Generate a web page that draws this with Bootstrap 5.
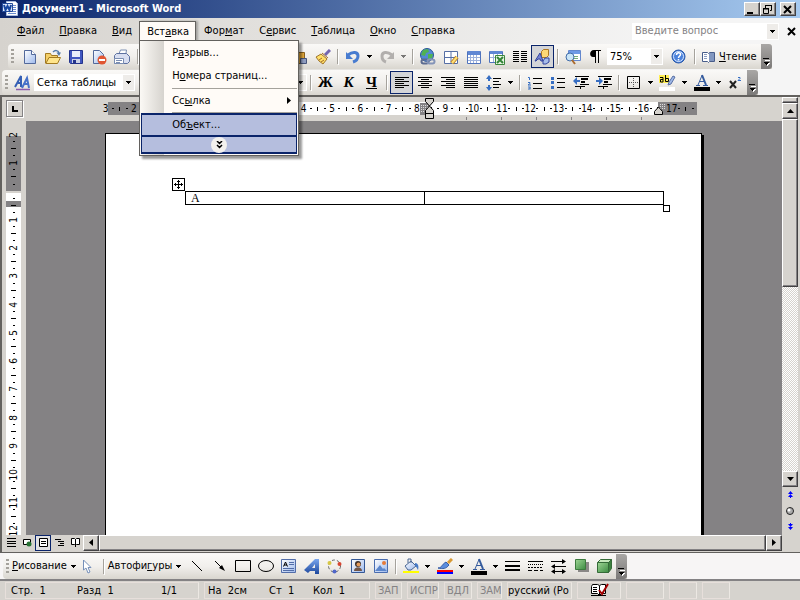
<!DOCTYPE html>
<html lang="ru">
<head>
<meta charset="utf-8">
<meta name="viewport" content="width=device-width, initial-scale=1">
<title>Документ1 - Microsoft Word</title>
<link rel="stylesheet" href="https://cdn.jsdelivr.net/npm/bootstrap@5.3.0/dist/css/bootstrap.min.css">
<style>
:root{--face:#d6d3ce;--navy:#0a246a;--sel:#b5bede;--dark:#848284}
body{font:11px/14px "DejaVu Sans Condensed","DejaVu Sans",sans-serif;color:#000;background:var(--face)}
button,input,select{font:inherit;color:inherit}
button{border:0;background:none;padding:0}
u{text-underline-offset:1px}
svg{display:block;flex:none}
.titlebar{height:19px;background:linear-gradient(90deg,#0a246a,#a6caf0);color:#fff;font-weight:700;padding:0 4px 0 2px}
.winbtn{width:16px;height:14px;background:var(--face);border:1px solid;border-color:#fff #424142 #424142 #fff;box-shadow:inset -1px -1px #848284}
.bars{background:linear-gradient(90deg,#d6d3ce,#f5f5f5 85%)}
.menurow{height:26px;padding-left:9px}
.menubtn{height:20px;padding:0 7px 0 8px}
.menubtn.show{background:#fffbf7;border:1px solid #63615e;border-bottom:0;padding:0 6px 0 7px;box-shadow:2px 0 2px #0004}
.grip{width:3px;height:15px;background:repeating-linear-gradient(180deg,#a5a29c 0 2px,transparent 2px 4px);margin:0 3px;flex:none}
.dropdown-menu.app{top:19px;left:0;width:160px;min-width:0;margin:0;padding:1px;border:1px solid #63615e;border-radius:0;font-size:11px;color:#000;background:linear-gradient(90deg,#fbf9f5,#d6d3ce 24px,#fffbf7 24px);box-shadow:3px 3px 2px #0006;z-index:20}
.app .dropdown-item{height:23px;padding:0 6px 0 31px;color:#000;line-height:22px;background:none}
.app .chosen{background:var(--sel);border:2px solid var(--navy);border-width:2px 1px 1px;padding-left:30px;line-height:20px}
.app hr{margin:0 0 0 31px;height:1px;border:0;background:#a5a29c;opacity:1}
.more{height:18px;width:100%;background:var(--sel);border:1px solid var(--navy);border-bottom-width:2px}
.more span{width:16px;height:16px;border-radius:8px;background:#f3f1ee}
.toolbar-x{height:25px;border-radius:4px 0 0 4px;background:linear-gradient(180deg,#faf9f7,#f1efec 50%,#d9d6cf);width:max-content;overflow:hidden}
.fmt{margin:1px 0 0 2px}
.tb{width:23px;height:23px;display:flex;align-items:center;justify-content:center;flex:none}
.tb.on{background:#d4d5d8;border:1px solid var(--navy)}
.dd{width:11px;height:23px;display:flex;align-items:center;justify-content:center;flex:none}
.sep{width:1px;height:15px;background:#a5a29c;box-shadow:1px 1px #fff;margin:0 3px;flex:none}
.undermenu{width:147px}
.cap{width:11px;height:25px;border-radius:0 3px 3px 0;background:linear-gradient(180deg,#a9a7a5,#7b7978);display:flex;align-items:flex-end;justify-content:center;padding-bottom:3px;flex:none}
.pick{height:17px;border:0;border-radius:0;appearance:none;padding:0 14px 0 3px;background:#fff url("data:image/svg+xml,%3Csvg xmlns='http://www.w3.org/2000/svg' width='12' height='17'%3E%3Cpath fill='%23eeece9' d='M0 1h11v15H0z'/%3E%3Cpath d='M3 7h5v1H7v1H6v1H5V9H4V8H3z'/%3E%3C/svg%3E") no-repeat right}
.w-zoom{width:56px}.w-style{width:101px}.w-font{width:116px}.w-size{width:48px}
.serif{font:700 15px/17px "Liberation Serif",serif}
.workspace{border-top:2px solid #63615e;border-left:2px solid #63615e;min-height:0}
.hruler{height:24px;margin-bottom:1px}
.tabsel{width:17px;height:17px;border:1px solid #848284;box-shadow:inset 1px 1px #fff,1px 1px #fff}
.cmband{width:595px;height:13px;margin-left:79px;background:linear-gradient(90deg,transparent 6px,#848284 6px 88px,#fff 88px 556px,#848284 556px);font-size:10px;line-height:13px}
.cmband i,.vband i{flex:1;min-width:0;min-height:0;display:flex;align-items:center;justify-content:center;font-style:normal}
.tick::before{content:"";width:1px;height:4px;background:#000}
.dot::before{content:"";width:2px;height:1px;background:#000}
.mark-h{position:absolute;top:1px}
.mark-a{left:418px}.mark-b{left:652px}
.tabs{position:absolute;left:464px;top:20px;width:177px;height:3px;background:repeating-linear-gradient(90deg,#848284 0 1px,transparent 1px 35px)}
.vr-col{width:24px;overflow:hidden;padding:10px 0 0 4px}
.vband{width:15px;height:425px;font-size:10px;background:linear-gradient(180deg,transparent 5px,#848284 5px 60px,var(--face) 60px 62px,#fff 62px 70px,#848284 70px 76px,#fff 76px)}
.vband span{writing-mode:vertical-rl;rotate:180deg;line-height:12px}
.vband .tick::before{width:5px;height:1px}
.canvas{background:#848284;overflow:hidden;padding:12px 80px 0 79px}
.sheet{background:#fff;border:1px solid #000;border-bottom:0;box-shadow:2px 2px #000;padding:57px 37px 0 79px}
.doc{width:100%;table-layout:fixed;border-collapse:collapse;font:12px/12px "Liberation Serif",serif}
.doc td{border:1px solid #000;height:13px;padding:0 5px}
.mover{position:absolute;left:-13px;top:-13px;width:13px;height:13px;border:1px solid #000;background:#fff}
.sizer{position:absolute;right:-6px;bottom:-7px;width:7px;height:7px;border:1px solid #000;background:#fff}
.bev{background:var(--face);border:1px solid;border-color:#fff #424142 #424142 #fff;box-shadow:inset -1px -1px #848284;display:flex;align-items:center;justify-content:center;flex:none}
.vscroll{width:18px;padding:0 2px 17px 0}
.split{height:6px}.thumb{height:168px}
.track{background:repeating-conic-gradient(#fff 0 25%,#d6d3ce 0 50%) 0 0/2px 2px}
.sq{width:16px;height:16px}
.hscroll{padding:0 0 1px 1px}
.viewbtn{width:16px;height:16px;display:flex;align-items:center;justify-content:center;flex:none}
.viewbtn.on{border:1px solid var(--navy);background:#e1e1e3}
.drawrow{height:30px;border-top:1px solid #63615e;border-bottom:2px solid #848284;background:#f7f5f5;padding:1px 0 0 3px}
.status{height:20px;padding:1px 0 0 5px;gap:5px}
.pane{height:17px;border:1px solid #e7dfdb;border-right-color:#ece8e3;padding:0 2px;white-space:pre;overflow:hidden;line-height:16px;flex:none}
.off{color:#848284}
.p1{width:194px;padding:0 5px}.p2{width:166px;padding:0 3px}
.c66{width:66px}.c61{width:61px}.c44{width:44px}
.w27{width:27px}.w32{width:32px}.w28{width:28px}.w25{width:25px}.w65{width:65px;padding:0}.w38{width:38px}
.ask .pick{width:147px;color:#848284}
</style>
</head>
<body class="vh-100 d-flex flex-column overflow-hidden">
<svg width="0" height="0" class="position-absolute"><defs>
<linearGradient id="gb" x2="1" y2="1"><stop stop-color="#fff"/><stop offset="1" stop-color="#9db9ec"/></linearGradient>
<linearGradient id="gg" x2="1" y2="1"><stop stop-color="#9fd695"/><stop offset="1" stop-color="#3c8b42"/></linearGradient>
<linearGradient id="ga" x2="0" y2="1"><stop stop-color="#7aa6ee"/><stop offset="1" stop-color="#1c479c"/></linearGradient>
<symbol id="dn" viewBox="0 0 5 3"><path d="M0 0h5v1H4v1H3v1H2V2H1V1H0z"/></symbol>
<symbol id="capi" viewBox="0 0 7 8"><path fill="#fff" d="M2 2h5v1H2zM2 5h5v1H6v1H5v1H4V7H3V6H2z"/><path d="M0 0h6v1H0zM1 4h5v1H5v1H4v1H3V6H2V5H1z"/></symbol>
<symbol id="fontcolor" viewBox="0 0 16 17"><path fill="none" stroke="#355b9d" d="M4 11l4-9.500M5.500 7.500H10"/><path stroke="#355b9d" stroke-width="2" d="M8 1l4 10"/><path stroke="#355b9d" d="M2 11.500h4m3 0h5"/><path d="M0 13h16v4H0z"/></symbol>
</defs></svg>

<header class="titlebar d-flex align-items-center">
<svg width="16" height="16"><path fill="#fff" stroke="#a8bce0" d="M4.500.5h9l2 2v12h-11z"/><path stroke="#6a8cd0" d="M10 4.500h4M10 6.500h4M10 8.500h4M10 10.500h4M6 12.500h8"/><path fill="#dce6fa" stroke="#234b9b" d="M.5 2.500h10v8H.5z"/><path fill="none" stroke="#1646a0" stroke-width="2" d="M2 4l1.500 5 2-4 2 4L9 4"/></svg>
<span class="flex-grow-1 ps-1">Документ1 - Microsoft Word</span>
<button class="winbtn" aria-label="Свернуть"><svg width="12" height="11"><path d="M2 8h6v2H2z"/></svg></button>
<button class="winbtn" aria-label="Восстановить"><svg width="13" height="11"><path fill="none" stroke="#000" d="M5 1.500h6M4.500 4V1m6 0v5.500H9M2 5h6M2.500 4v5.500h5V4M2 4.500h6"/></svg></button>
<button class="winbtn ms-1" aria-label="Закрыть"><svg width="12" height="11"><path stroke="#000" stroke-width="2" d="M3 2l7 7m0-7L3 9"/></svg></button>
</header>

<div class="bars">
<nav class="menurow d-flex align-items-center position-relative" aria-label="Меню">
<button class="menubtn"><u>Ф</u>айл</button>
<button class="menubtn"><u>П</u>равка</button>
<button class="menubtn"><u>В</u>ид</button>
<div class="dropdown">
<button class="menubtn show" aria-expanded="true">Вст<u>а</u>вка</button>
<div class="dropdown-menu app show">
<a class="dropdown-item" href="#">Р<u>а</u>зрыв...</a>
<a class="dropdown-item" href="#">Н<u>о</u>мера страниц...</a>
<hr>
<a class="dropdown-item d-flex justify-content-between align-items-center" href="#"><span>Сс<u>ы</u>лка</span><svg width="4" height="7"><path d="M0 0l4 3.500L0 7z"/></svg></a>
<hr>
<a class="dropdown-item chosen" href="#">Об<u>ъ</u>ект...</a>
<button class="more d-flex justify-content-center align-items-center" aria-label="Развернуть"><span class="d-flex align-items-center justify-content-center"><svg width="7" height="8"><path fill="none" stroke="#000" stroke-width="1.500" d="M1 0l2.500 2.500L6 0M1 4l2.500 2.500L6 4"/></svg></span></button>
</div>
</div>
<button class="menubtn">Фор<u>м</u>ат</button>
<button class="menubtn">С<u>е</u>рвис</button>
<button class="menubtn"><u>Т</u>аблица</button>
<button class="menubtn"><u>О</u>кно</button>
<button class="menubtn"><u>С</u>правка</button>
<div class="ask ms-auto"><select class="pick" aria-label="Вопрос"><option>Введите вопрос</option></select></div>
<button class="ms-1 p-1" aria-label="Закрыть документ"><svg width="9" height="9"><path stroke="#000" stroke-width="2" d="M1 1l7 7m0-7L1 8"/></svg></button>
</nav>

<div class="toolbar-x d-flex align-items-center ms-2" role="toolbar">
<span class="grip me-1"></span>
<button class="tb" aria-label="Создать"><svg width="16" height="16"><path fill="url(#gb)" stroke="#52699b" d="M2.500 1.500h7l4 4v9h-11z"/><path fill="#fff" stroke="#52699b" d="M9.500 1.500v4h4"/></svg></button>
<button class="tb" aria-label="Открыть"><svg width="16" height="16"><path fill="#f4cf68" stroke="#a37a21" d="M.5 14V4.500h5l1 2h6V9"/><path fill="#ffe58c" stroke="#a37a21" d="M.8 14.500L4 8.500h11.500l-3 6z"/><path fill="none" stroke="#5379a8" stroke-width="1.500" d="M8 3c2-2 5-2 6 1"/><path fill="#5379a8" d="M11.500 3.500H16L14 7z"/></svg></button>
<button class="tb" aria-label="Сохранить"><svg width="16" height="16"><path fill="#4157c0" stroke="#24348c" d="M1.500 1.500h13v13h-12l-1-1z"/><path fill="#e8eefb" d="M4 2h8v6H4z"/><path fill="#ccd3e8" d="M4 10h8v4H4z"/><path fill="#24348c" d="M5 11h3v3H5z"/></svg></button>
<button class="tb" aria-label="Разрешения"><svg width="16" height="16"><path fill="url(#gb)" stroke="#52699b" d="M2.500 1.500h6l4 4v9h-10z"/><circle cx="11" cy="11" r="4.500" fill="#e05632"/><path fill="#fff" d="M8 10h6v2H8z"/></svg></button>
<button class="tb" aria-label="Печать"><svg width="17" height="16"><path fill="#fff" stroke="#7b8eb2" d="M5.500 6l2-5h6l-1 6"/><path fill="#d8def0" stroke="#5d71a0" d="M1.500 6.500l2-2h10l3 3v5l-2 2h-13z"/><path fill="#fff" stroke="#7b8eb2" d="M1.500 9.500h9v5h-9z"/><path stroke="#7b8eb2" d="M3 11.500h6m-6 2h4"/></svg></button>
<span class="sep ms-1"></span>
<span class="undermenu"></span>
<button class="tb" aria-label="Вставить"><svg width="16" height="16"><path fill="#e1a73a" stroke="#8a611d" d="M2.500 3.500h10v11h-10z"/><path fill="#8e9cc0" stroke="#46557b" d="M8.500 9.500h6v5h-6z"/></svg></button>
<button class="tb" aria-label="Формат по образцу"><svg width="16" height="16"><path stroke="#7467b1" stroke-width="3" d="M15 1l-5 5"/><path fill="#ffdf68" stroke="#9f742a" d="M1 8l5-3 6 5-4 5-4-3z"/><path stroke="#a46b28" d="M7 4l6 5M4 11l3-2m-1 4l3-2"/></svg></button>
<span class="sep"></span>
<button class="tb" aria-label="Отменить"><svg width="16" height="16"><path fill="none" stroke="#487cd0" stroke-width="3" d="M3 6c5-4 10-3 10 1 0 3-2 5-5 6"/><path fill="#487cd0" d="M1 3v7h7z"/></svg></button>
<span class="dd"><svg width="5" height="3"><use href="#dn"/></svg></span>
<button class="tb" aria-label="Вернуть"><svg width="16" height="16"><path fill="none" stroke="#b2afad" stroke-width="3" d="M13 6C8 2 3 3 3 7c0 3 1 5 4 6"/><path fill="#b2afad" d="M15 3v7H8z"/></svg></button>
<span class="dd"><svg width="5" height="3" opacity=".5"><use href="#dn"/></svg></span>
<span class="sep"></span>
<button class="tb" aria-label="Гиперссылка"><svg width="17" height="17"><circle cx="8" cy="7" r="6.500" fill="#5289d6" stroke="#285495"/><path fill="#50b252" d="M4 2l5-1 1 3-3 1-1 3-4-1zM9 6l5 0-1 4-4 1z"/><rect x="2.500" y="11.500" width="7" height="4" rx="2" fill="none" stroke="#5d6c91" stroke-width="2"/><rect x="8.500" y="11.500" width="7" height="4" rx="2" fill="none" stroke="#8494b8" stroke-width="2"/></svg></button>
<button class="tb" aria-label="Таблицы и границы"><svg width="16" height="16"><path fill="#fff" stroke="#566fa5" d="M1.500 2.500h13v12h-13zM8 3v11M2 8.500h12"/><path stroke="#ba8025" stroke-width="4" d="M14 8l-5 6"/><path stroke="#ffe076" stroke-width="2" d="M14 8l-5 6"/></svg></button>
<button class="tb" aria-label="Добавить таблицу"><svg width="16" height="16"><path fill="#fff" stroke="#4f73bd" d="M1.500 2.500h13v12h-13z"/><path fill="#5f87d4" d="M2 2h12v4H2z"/><path stroke="#9cb1dc" d="M4.500 6v8m3-8v8m3-8v8M2 8.500h12M2 11.500h12"/></svg></button>
<button class="tb" aria-label="Добавить Excel"><svg width="16" height="16"><path fill="#fff" stroke="#4f73bd" d="M.5 2.500h13v11H.5z"/><path fill="#5f87d4" d="M1 2h12v3H1z"/><path stroke="#9cb1dc" d="M4.500 5v8m4-8v8M1 8.500h12"/><path fill="#e7f5e3" stroke="#3b863c" d="M6.500 6.500h9v9h-9z"/><path stroke="#328436" stroke-width="2" d="M8 8l6 6m0-6l-6 6"/></svg></button>
<button class="tb" aria-label="Колонки"><svg width="14" height="12"><path stroke="#000" stroke-dasharray="6 2" d="M0 .5h14M0 2.500h14M0 4.500h14M0 6.500h14M0 8.500h14M0 10.500h14"/></svg></button>
<button class="tb on" aria-label="Рисование"><svg width="17" height="16"><path fill="#ffd875" stroke="#ae7722" d="M7.500 2.500l2-2h5v6l-2 2h-5z"/><path fill="#7582d2" stroke="#32459f" d="M1 12L6 4l3 8H7l-1-2H4l-2 2z"/><path fill="#a7bce9" stroke="#32459f" d="M9 12l2-3h4v4l-3 2H9z"/></svg></button>
<span class="sep"></span>
<button class="tb" aria-label="Схема документа"><svg width="17" height="16"><path fill="#fff" stroke="#6387cd" d="M4.500 1.500h12v10h-12z"/><path fill="#6e99e6" d="M5 2h11v3H5z"/><path stroke="#77ad77" d="M10 7.500h4m-4 2h4"/><circle cx="6" cy="8" r="4" fill="#cae5f7" stroke="#426da9"/><path stroke="#ab6c30" stroke-width="2" d="M8 11l3 4"/></svg></button>
<button class="tb" aria-label="Непечатаемые знаки"><svg width="11" height="13"><path d="M4 0h7v1H9v12H8V1H6v12H5V7H3C-1 7-1 0 4 0z"/></svg></button>
<select class="pick w-zoom" aria-label="Масштаб"><option>75%</option></select>
<button class="tb mx-1" aria-label="Справка Word"><svg width="15" height="15"><circle cx="7.500" cy="7.500" r="6.500" fill="#4b82dc" stroke="#2857a7"/><circle cx="7.500" cy="7.500" r="5" fill="none" stroke="#d7e6ff"/><path fill="none" stroke="#fff" stroke-width="1.500" d="M5.500 6c0-3 4-3 4-.5 0 1.500-2 1.500-2 3.500m0 1v1.500"/></svg></button>
<span class="sep ms-0"></span>
<button class="d-flex align-items-center gap-1 px-1"><svg width="13" height="12"><path fill="#fff" stroke="#485d8a" d="M.5 1.500h5l1 1 1-1h5v9h-5l-1 1-1-1h-5z"/><path stroke="#8a9bc0" d="M2 3.500h3m-3 2h3m-3 2h3"/><path fill="#8297c0" d="M7 2h5v8H7z"/></svg><span><u>Ч</u>тение</span></button>
<span class="cap"><svg width="7" height="8"><use href="#capi"/></svg></span>
</div>

<div class="toolbar-x fmt d-flex align-items-center" role="toolbar">
<span class="grip"></span>
<button class="tb" aria-label="Стили"><svg width="17" height="17"><path fill="none" stroke="#355fb4" stroke-width="2" d="M1 13L7 2v11M4 9h3"/><path fill="none" stroke="#4671c9" stroke-width="2" d="M8 14l5-10 2 10M10 10h4"/><path stroke="#8b5bae" stroke-width="1.500" d="M2 15.500h14"/></svg></button>
<select class="pick w-style" aria-label="Стиль"><option>Сетка таблицы</option></select>
<select class="pick ms-1 w-font" aria-label="Шрифт"><option>Times New Roman</option></select>
<select class="pick ms-1 w-size" aria-label="Размер"><option>12</option></select>
<span class="sep"></span>
<button class="tb serif" aria-label="Полужирный">Ж</button>
<button class="tb serif fst-italic" aria-label="Курсив">К</button>
<button class="tb serif" aria-label="Подчеркнутый"><u>Ч</u></button>
<span class="sep"></span>
<button class="tb on" aria-label="По левому краю"><svg width="14" height="12"><path stroke="#000" d="M0 .5h14M0 2.500h9M0 4.500h14M0 6.500h9M0 8.500h14M0 10.500h9"/></svg></button>
<button class="tb" aria-label="По центру"><svg width="14" height="12"><path stroke="#000" d="M0 .5h14M3 2.500h8M0 4.500h14M3 6.500h8M0 8.500h14M3 10.500h8"/></svg></button>
<button class="tb" aria-label="По правому краю"><svg width="14" height="12"><path stroke="#000" d="M0 .5h14M5 2.500h9M0 4.500h14M5 6.500h9M0 8.500h14M5 10.500h9"/></svg></button>
<button class="tb" aria-label="По ширине"><svg width="14" height="12"><path stroke="#000" d="M0 .5h14M0 2.500h14M0 4.500h14M0 6.500h14M0 8.500h14M0 10.500h14"/></svg></button>
<button class="tb" aria-label="Интервал"><svg width="15" height="16"><path fill="#376ec2" d="M3 0l3 4H4v2H2V4H0zM3 16l3-4H4v-2H2v2H0z"/><path stroke="#000" d="M7 3.500h8M7 6.500h6M7 9.500h8M7 12.500h6"/></svg></button>
<span class="dd"><svg width="5" height="3"><use href="#dn"/></svg></span>
<span class="sep"></span>
<button class="tb" aria-label="Нумерация"><svg width="15" height="14"><path fill="none" stroke="#376ec2" d="M1 1.500h1.500V4M1 6.500h2v1l-2 1.500h3M1 11h2.500l-1 1 1 1H1"/><path stroke="#000" d="M6 2.500h9M6 7.500h9M6 12.500h9"/></svg></button>
<button class="tb" aria-label="Маркеры"><svg width="14" height="13"><path fill="#376ec2" d="M0 1h3v3H0zM0 5h3v3H0zM0 10h3v3H0z"/><path stroke="#000" d="M6 2.500h8M6 6.500h8M6 11.500h8"/></svg></button>
<button class="tb" aria-label="Уменьшить отступ"><svg width="16" height="13"><path stroke="#000" d="M2 .5h14M2 10.500h10M7.500 11v2"/><path stroke="#000" stroke-width="2" d="M8 3h7M8 6h4"/><path stroke="#000" d="M7 8.500h9"/><path fill="#376ec2" d="M0 5l4-4v3h3v2H4v3z"/></svg></button>
<button class="tb" aria-label="Увеличить отступ"><svg width="16" height="13"><path stroke="#000" d="M2 .5h14M2 10.500h10M7.500 11v2"/><path stroke="#000" stroke-width="2" d="M8 3h7M8 6h4"/><path stroke="#000" d="M7 8.500h9"/><path fill="#376ec2" d="M7 5L3 1v3H0v2h3v3z"/></svg></button>
<span class="sep"></span>
<button class="tb" aria-label="Границы"><svg width="13" height="13"><path fill="none" stroke="#000" d="M.5.5h12v12H.5z"/><path stroke="#555" stroke-dasharray="1 1" d="M6.500 2v9M2 6.500h9"/></svg></button>
<span class="dd"><svg width="5" height="3"><use href="#dn"/></svg></span>
<button class="tb" aria-label="Выделение цветом"><svg width="17" height="17"><path fill="#ffee52" d="M0 1h10v8H0z"/><path fill="none" stroke="#000" d="M1 3.500h3V8H1.500V5.500H4M6.500 1v6.500h3v-3h-3"/><path fill="#9eb8e8" stroke="#586fa3" d="M14 2l2 1-4 7-3 1 1-3z"/><path fill="#fff" d="M0 13h16v4H0z"/></svg></button>
<span class="dd"><svg width="5" height="3"><use href="#dn"/></svg></span>
<button class="tb" aria-label="Цвет шрифта"><svg width="16" height="17"><use href="#fontcolor"/></svg></button>
<span class="dd"><svg width="5" height="3"><use href="#dn"/></svg></span>
<button class="tb" aria-label="Надстрочный"><svg width="13" height="13"><path stroke="#222" stroke-width="2" d="M1 5l6 7m0-7l-6 7"/><path fill="none" stroke="#376ec2" d="M9 1.500h2v1L9 4.500h3"/></svg></button>
<span class="cap"><svg width="7" height="8"><use href="#capi"/></svg></span>
</div>
</div>

<main class="workspace d-flex flex-grow-1">
<div class="d-flex flex-column flex-grow-1 overflow-hidden">
<div class="hruler d-flex align-items-center position-relative">
<button class="tabsel ms-1 d-flex align-items-center justify-content-center" aria-label="Табуляция"><svg width="6" height="6"><path d="M0 0h2v4h4v2H0z"/></svg></button>
<div class="cmband d-flex" id="hband"></div>
<svg class="mark-h mark-a" width="16" height="22"><path fill="#848284" d="M0 5h9v12H0z"/><path stroke="#ddd" stroke-dasharray="1 1" d="M1 7.500h7M1 9.500h7M1 11.500h7M1 13.500h7"/><path fill="#d6d3ce" stroke="#000" d="M5.500.5h8v3l-4 4.500-4-4.500zM5.500 15.500v-3l4-4.500 4 4.500v3zM5.500 15.500h8v5h-8z"/></svg>
<svg class="mark-h mark-b" width="13" height="20"><path fill="#848284" d="M5 4h8v12H5z"/><path stroke="#ddd" stroke-dasharray="1 1" d="M6 6.500h6M6 8.500h6M6 10.500h6"/><path fill="#d6d3ce" stroke="#000" d="M.5 16.500v-3l4-4.500 4 4.500v3z"/></svg>
<span class="tabs"></span>
</div>
<div class="d-flex flex-grow-1 overflow-hidden">
<div class="vr-col flex-shrink-0"><div class="vband d-flex flex-column" id="vband"></div></div>
<div class="canvas flex-grow-1 d-flex"><div class="sheet flex-grow-1"><div class="position-relative">
<table class="doc"><tbody><tr><td>A</td><td></td></tr></tbody></table>
<span class="mover"><svg width="11" height="11"><path fill="none" stroke="#000" d="M5.500 1v9M1 5.500h9M4 2.500h3M4 8.500h3M2.500 4v3M8.500 4v3"/></svg></span><span class="sizer"></span>
</div></div></div>
</div>
<div class="hscroll d-flex align-items-center">
<button class="viewbtn" aria-label="Обычный"><svg width="9" height="9"><path stroke="#000" d="M0 .5h9M0 3.500h9M0 5.500h9M0 8.500h9"/></svg></button>
<button class="viewbtn" aria-label="Веб"><svg width="9" height="9"><path fill="#fff" stroke="#000" d="M.5 1.500h7v5h-7z"/><circle cx="6" cy="6" r="2.500" fill="#267233"/></svg></button>
<button class="viewbtn on" aria-label="Разметка"><svg width="9" height="9"><path fill="#fff" stroke="#000" d="M.5.5h8v8h-8zM2 3.500h5m-5 2h5"/></svg></button>
<button class="viewbtn" aria-label="Структура"><svg width="9" height="9"><path stroke="#000" d="M0 1.500h6M3 3.500h6M5 5.500h4M3 7.500h6"/></svg></button>
<button class="viewbtn" aria-label="Чтение"><svg width="9" height="9"><path fill="#fff" stroke="#000" d="M.5.5h3l1 1 1-1h3v6h-3l-1 1-1-1h-3zM4.500 1v8"/></svg></button>
<button class="bev sq" aria-label="Влево"><svg width="4" height="7"><path d="M4 0v7L0 3.500z"/></svg></button>
<div class="bev sq flex-grow-1"></div>
<button class="bev sq" aria-label="Вправо"><svg width="4" height="7"><path d="M0 0v7l4-3.500z"/></svg></button>
</div>
</div>
<div class="vscroll d-flex flex-column align-items-stretch flex-shrink-0">
<div class="bev split"></div>
<button class="bev sq" aria-label="Вверх"><svg width="7" height="4"><path d="M0 4h7L3.500 0z"/></svg></button>
<div class="track flex-grow-1"><div class="bev thumb"></div></div>
<button class="bev sq" aria-label="Вниз"><svg width="7" height="4"><path d="M0 0h7L3.500 4z"/></svg></button>
<button class="sq d-flex align-items-center justify-content-center" aria-label="Назад"><svg width="5" height="7"><path fill="#00f" d="M2.500 0L5 3H0zM2.500 3L5 6H0zM2 5h1v2H2z"/></svg></button>
<button class="sq d-flex align-items-center justify-content-center" aria-label="Объект"><svg width="8" height="8"><circle cx="4" cy="4" r="3.500" fill="#aaa" stroke="#222"/><circle cx="3" cy="3" r="1.500" fill="#fff"/></svg></button>
<button class="sq d-flex align-items-center justify-content-center" aria-label="Вперед"><svg width="5" height="7"><path fill="#00f" d="M0 1h5L2.500 4zM0 4h5L2.500 7zM2 0h1v2H2z"/></svg></button>
</div>
</main>

<div class="drawrow">
<div class="toolbar-x d-flex align-items-center" role="toolbar">
<span class="grip"></span>
<button class="d-flex align-items-center gap-1"><span><u>Р</u>исование</span><svg width="5" height="3"><use href="#dn"/></svg></button>
<button class="tb" aria-label="Выбор объектов"><svg width="10" height="15"><path fill="#fff" stroke="#758fb9" d="M1.500 1v10l2.500-2 2 5 2-1-2-4.500h3z"/></svg></button>
<span class="sep mx-1"></span>
<button class="d-flex align-items-center gap-1"><span>Автофи<u>г</u>уры</span><svg width="5" height="3"><use href="#dn"/></svg></button>
<button class="tb ms-1" aria-label="Линия"><svg width="12" height="12"><path stroke="#000" d="M1 1l10 10"/></svg></button>
<button class="tb" aria-label="Стрелка"><svg width="12" height="12"><path stroke="#000" d="M1 1l8 8"/><path d="M11 11L5 8l3-3z"/></svg></button>
<button class="tb" aria-label="Прямоугольник"><svg width="16" height="12"><path fill="none" stroke="#000" d="M.5.5h15v11H.5z"/></svg></button>
<button class="tb" aria-label="Овал"><svg width="16" height="12"><ellipse cx="8" cy="6" rx="7.500" ry="5.500" fill="none" stroke="#000"/></svg></button>
<button class="tb" aria-label="Надпись"><svg width="15" height="14"><path fill="url(#gb)" stroke="#526da8" d="M.5.5h14v13H.5z"/><path fill="none" stroke="#000" d="M2.500 7.500L4.500 3l2 4.500M3 6h3"/><path stroke="#526da8" d="M8 3.500h5M8 5.500h5M2 9.500h11M2 11.500h11"/></svg></button>
<button class="tb" aria-label="WordArt"><svg width="16" height="15"><path fill="url(#ga)" d="M0 11L11 0h4v15h-4v-3H6l-2 2zM8 9h3V5z" fill-rule="evenodd"/></svg></button>
<button class="tb" aria-label="Диаграмма"><svg width="15" height="16"><circle cx="7.500" cy="8" r="6" fill="none" stroke="#666" stroke-dasharray="3 2"/><circle cx="2.500" cy="5" r="2" fill="#d7c744"/><circle cx="12.500" cy="6" r="2" fill="#d84631"/><circle cx="7.500" cy="13.500" r="2" fill="#5067c9"/></svg></button>
<button class="tb" aria-label="Картинка"><svg width="14" height="14"><path fill="url(#gb)" stroke="#345896" d="M.5.5h13v13H.5z"/><circle cx="7" cy="5" r="3" fill="#3e3028"/><circle cx="7.500" cy="5.500" r="2" fill="#e49b5c"/><path fill="#725647" d="M3 12c0-5 8-5 8 0z"/></svg></button>
<button class="tb" aria-label="Рисунок"><svg width="14" height="14"><path fill="url(#gb)" stroke="#4a6daf" d="M.5.5h13v13H.5z"/><circle cx="10" cy="4" r="2" fill="#e67b39"/><path fill="#5b86cc" d="M1 12l5-6 3 4 1-1 3 3z"/></svg></button>
<span class="sep"></span>
<button class="tb" aria-label="Цвет заливки"><svg width="16" height="16"><path fill="url(#gb)" stroke="#4a6793" d="M2 8l6-5 5 5-5 4H5z"/><path fill="none" stroke="#4a6793" d="M5 5V1h3v4"/><path fill="#477ac6" d="M12 5c3 0 4 3 3 7l-3-5z"/><path fill="#ff0" d="M0 13h16v2H0z"/></svg></button>
<span class="dd"><svg width="5" height="3"><use href="#dn"/></svg></span>
<button class="tb" aria-label="Цвет линий"><svg width="16" height="16"><path stroke="#d89933" stroke-width="3" d="M15 1l-4 4"/><path fill="#5b8ddd" stroke="#355ca7" d="M1 10c4 0 3-3 8-6l3 3c-3 4-6 4-11 3z"/><path fill="#f00" d="M0 12h16v2H0z"/><path fill="#00f" d="M0 14h16v2H0z"/></svg></button>
<span class="dd"><svg width="5" height="3"><use href="#dn"/></svg></span>
<button class="tb" aria-label="Цвет текста"><svg width="16" height="17"><use href="#fontcolor"/></svg></button>
<span class="dd"><svg width="5" height="3"><use href="#dn"/></svg></span>
<button class="tb" aria-label="Тип линии"><svg width="15" height="10"><path d="M0 0h15v1H0zM0 4h15v2H0zM0 8h15v2H0z"/></svg></button>
<button class="tb" aria-label="Тип штриха"><svg width="15" height="10"><path stroke="#000" d="M0 .5h15"/><path stroke="#000" stroke-dasharray="1 1" d="M0 3.500h15"/><path stroke="#000" stroke-dasharray="2 1" d="M0 6.500h15"/><path stroke="#000" stroke-dasharray="4 2" d="M0 9.500h15"/></svg></button>
<button class="tb" aria-label="Вид стрелки"><svg width="15" height="15"><path stroke="#000" d="M0 2.500h14M1 7.500h14M1 12.500h13"/><path d="M15 2.500L11 0v5zM0 7.500L4 5v5zM0 12.500L4 10v5zM15 12.500L11 10v5z"/></svg></button>
<button class="tb" aria-label="Тень"><svg width="14" height="14"><path fill="#8a8886" d="M3 3h11v10H3z"/><path fill="url(#gg)" stroke="#3d7b3e" d="M.5.5h10v10H.5z"/></svg></button>
<button class="tb" aria-label="Объем"><svg width="15" height="14"><path fill="#c6e9bd" stroke="#356b38" d="M.5 3.500l3-3h11l-3 3z"/><path fill="#3c813f" stroke="#356b38" d="M11.500 3.500l3-3v9l-3 4z"/><path fill="url(#gg)" stroke="#356b38" d="M.5 3.500h11v10H.5z"/></svg></button>
<span class="cap"><svg width="7" height="8"><use href="#capi"/></svg></span>
</div>
</div>

<footer class="status d-flex">
<div class="pane p1 d-flex"><span class="c66">Стр.  1</span><span class="flex-grow-1">Разд  1</span><span class="pe-3">1/1</span></div>
<div class="pane p2 d-flex"><span class="c61">На  2см</span><span class="c44">Ст  1</span><span>Кол  1</span></div>
<div class="pane off w27">ЗАП</div>
<div class="pane off w32">ИСПР</div>
<div class="pane off w28">ВДЛ</div>
<div class="pane off w25">ЗАМ</div>
<div class="pane w65">русский (Ро</div>
<div class="pane c44 d-flex justify-content-center"><svg width="19" height="14"><path fill="#fff" stroke="#000" d="M1.500 3.500l1-2h5l2 1 2-1h4v9h-4l-2 2-2-2h-6z"/><path stroke="#000" d="M9.500 3v9M3 4.500h4M3 6.500h4M3 8.500h4M1 12.500h15"/><path fill="none" stroke="#a50000" stroke-width="2" d="M9 7l3 4L18 1"/></svg></div>
<div class="pane w38"></div><div class="pane w28"></div><div class="pane w28"></div>
</footer>
<script>
function fillBand(id, from, to) {
  const band = document.getElementById(id);
  for (let n = from; n <= to; n++) {
    const label = n === 0 ? '<i></i>' : '<i><span>' + Math.abs(n) + '</span></i>';
    band.insertAdjacentHTML('beforeend', label + '<i class="dot"></i><i class="tick"></i><i class="dot"></i>');
  }
}
fillBand('hband', -3, 17);
fillBand('vband', -2, 12);
</script>
<script src="https://cdn.jsdelivr.net/npm/bootstrap@5.3.0/dist/js/bootstrap.bundle.min.js"></script>
</body>
</html>
